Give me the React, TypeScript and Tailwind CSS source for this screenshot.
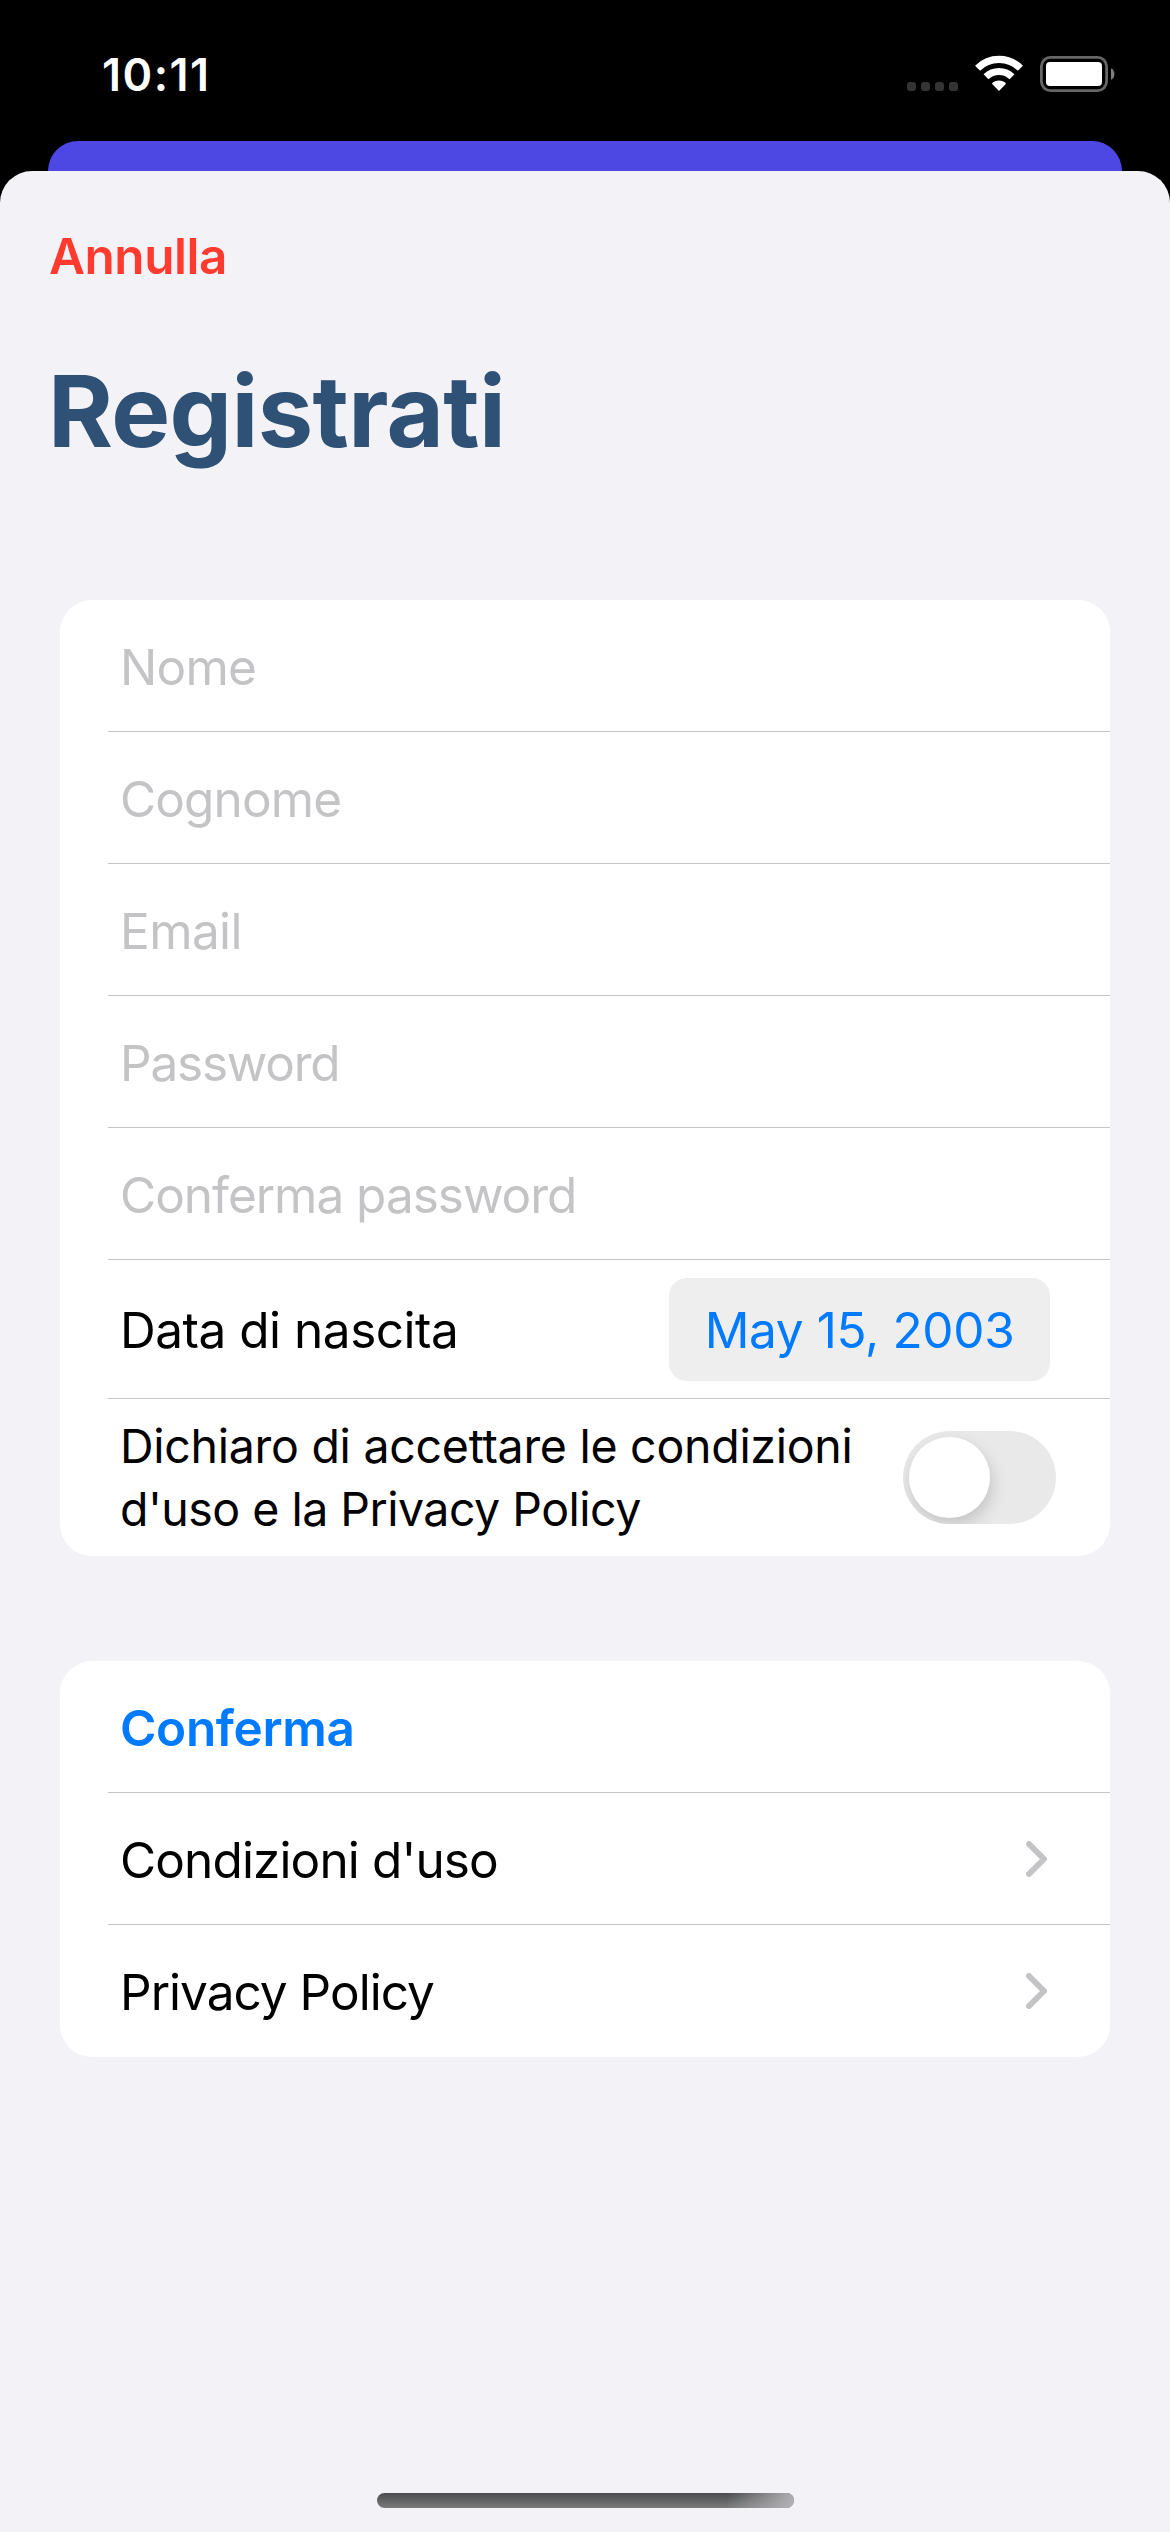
import type { ReactNode } from 'react';

const placeholders = [
  { label: 'Nome', tracking: 'tracking-[-0.78px]' },
  { label: 'Cognome', tracking: 'tracking-[-0.86px]' },
  { label: 'Email', tracking: 'tracking-[-0.6px]' },
  { label: 'Password', tracking: 'tracking-[-1.22px]' },
  { label: 'Conferma password', tracking: 'tracking-[-1.02px]' },
];

function StatusBar() {
  return (
    <header className="flex h-[141px] items-start justify-between pl-[102px] pr-[55px] text-white">
      <span className="mt-[42px] text-[45px] leading-[66px] font-semibold tracking-[1.5px]">10:11</span>
      <div className="mt-[55px] flex items-start">
        <div className="mt-[27px] flex gap-[5px]">
          {[0, 1, 2, 3].map((dot) => (
            <span key={dot} className="size-[9px] rounded-[3px] bg-[#343434]" />
          ))}
        </div>
        <svg className="ml-[16px] h-[37px] w-[50px]" viewBox="0 0 50 37" fill="none">
          <path d="M3.6 13.2A30.5 30.5 0 0 1 46.4 13.2" stroke="#fff" strokeWidth="7.2" />
          <path d="M12 21.8A18.8 18.8 0 0 1 38 21.8" stroke="#fff" strokeWidth="7" />
          <path d="M25 36 18.6 29.4C18 28.7 18.1 28 18.8 27.5A10.4 10.4 0 0 1 31.2 27.5C31.9 28 32 28.7 31.4 29.4Z" fill="#fff" />
        </svg>
        <svg className="mt-[1px] ml-[16px] h-[36px] w-[75px]" viewBox="0 0 75 36" fill="none">
          <rect x="1.4" y="1.4" width="65.2" height="33.2" rx="9" stroke="#666" strokeWidth="2.8" />
          <rect x="6" y="6" width="56" height="24" rx="4" fill="#fff" />
          <path d="M71 12.2A6.6 6.6 0 0 1 71 23.8Z" fill="#808080" />
        </svg>
      </div>
    </header>
  );
}

function Card({ children, className = '' }: { children: ReactNode; className?: string }) {
  return <section className={`mx-[60px] overflow-hidden rounded-[32px] bg-white pl-[48px] ${className}`}>{children}</section>;
}

function Row({ children, className = '' }: { children: ReactNode; className?: string }) {
  return <div className={`flex items-center border-b border-[#c5c5c7] pl-[12px] ${className}`}>{children}</div>;
}

function Chevron() {
  return (
    <svg className="ml-auto h-[36px] w-[21px]" viewBox="0 0 21 36" fill="none">
      <path d="M3 3 18 18 3 33" stroke="#c4c4c6" strokeWidth="6" strokeLinecap="round" strokeLinejoin="round" />
    </svg>
  );
}

export default function App() {
  return (
    <div className="flex h-[2532px] w-[1170px] flex-col overflow-hidden bg-black font-['Inter',sans-serif]">
      <StatusBar />
      <div className="mx-[48px] -mb-[20px] h-[50px] shrink-0 rounded-t-[30px] bg-[#4d47e3]" />
      <main className="relative flex flex-1 flex-col rounded-t-[32px] bg-[#f2f2f7]">
        <button className="mt-[52px] ml-[49px] h-[66px] self-start text-[49.5px] leading-[66px] font-semibold tracking-[-0.47px] text-[#ff3b30]">
          Annulla
        </button>
        <h1 className="mt-[62px] ml-[48px] h-[120px] text-[99px] leading-[120px] font-bold tracking-[-0.62px] text-[#2f5176]">
          Registrati
        </h1>

        <Card className="mt-[129px] h-[956px]">
          {placeholders.map(({ label, tracking }) => (
            <Row key={label} className="h-[132px]">
              <span className={`pt-[2px] text-[49.5px] leading-[60px] text-[#c4c4c6] ${tracking}`}>{label}</span>
            </Row>
          ))}
          <Row className="h-[139px] justify-between pr-[60px]">
            <span className="pt-[2px] text-[49.5px] leading-[60px] tracking-[-0.48px]">Data di nascita</span>
            <span className="mt-[1px] flex h-[103px] w-[381px] items-center justify-center rounded-[18px] bg-[#eeeeef] pt-[1px] text-[49.5px] leading-[60px] tracking-[-0.34px] text-[#007aff]">
              May 15, 2003
            </span>
          </Row>
          <div className="flex h-[157px] items-center justify-between pr-[54px] pl-[12px]">
            <p className="text-[46.5px] leading-[63px] whitespace-nowrap">
              <span className="block tracking-[-0.28px]">Dichiaro di accettare le condizioni</span>
              <span className="block tracking-[-0.52px]">d'uso e la Privacy Policy</span>
            </p>
            <div className="flex h-[93px] w-[153px] items-center overflow-hidden rounded-full bg-[#e9e9ea] pl-[6px]">
              <span className="size-[81px] rounded-full bg-white shadow-[2px_7px_16px_rgba(0,0,0,0.16)]" />
            </div>
          </div>
        </Card>

        <Card className="mt-[105px] h-[396px]">
          <Row className="h-[132px]">
            <span className="pt-[2px] text-[49.5px] leading-[60px] font-semibold tracking-[-0.35px] text-[#007aff]">Conferma</span>
          </Row>
          <Row className="h-[132px] pr-[63px]">
            <span className="pt-[2px] text-[49.5px] leading-[60px] tracking-[-0.87px]">Condizioni d'uso</span>
            <Chevron />
          </Row>
          <div className="flex h-[132px] items-center pr-[63px] pl-[12px]">
            <span className="pt-[2px] text-[49.5px] leading-[60px] tracking-[-0.98px]">Privacy Policy</span>
            <Chevron />
          </div>
        </Card>

        <div className="mt-auto mb-[24px] h-[15px] w-[417px] self-center overflow-hidden rounded-full bg-linear-to-b from-[#4b4c4d] to-[#7b7b7c]">
          <div className="ml-auto h-full w-[66px] bg-linear-[105deg] from-transparent to-[#b4b4b8]" />
        </div>
      </main>
    </div>
  );
}
